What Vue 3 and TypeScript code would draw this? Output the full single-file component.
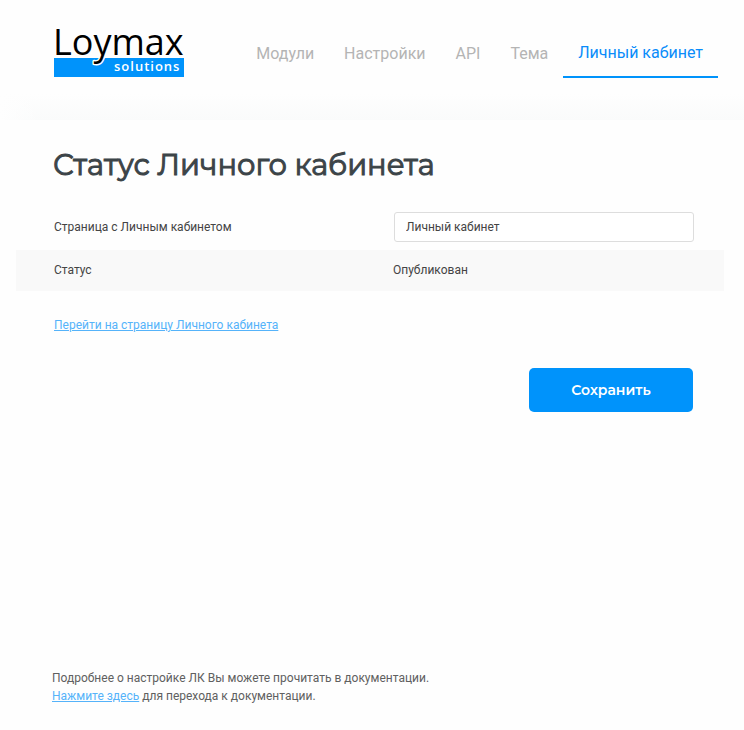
<script setup lang="ts">
import { ref } from 'vue'

const tabs = ['Модули', 'Настройки', 'API', 'Тема', 'Личный кабинет']
const active = ref('Личный кабинет')
const page = ref('Личный кабинет')
</script>

<template>
  <div class="app">
    <header class="header">
      <a class="logo" href="#" aria-label="Loymax solutions">
        <svg width="140" height="60" viewBox="-4 -4 140 60">
          <rect x="1" y="36" width="130" height="19" fill="#0093fb" />
          <text class="brand" x="0" y="33">Loymax</text>
          <text class="sub" x="61" y="49">solutions</text>
        </svg>
      </a>
      <nav class="nav">
        <a v-for="tab in tabs" :key="tab" href="#" class="tab" :class="{ active: tab === active }" @click.prevent="active = tab">{{ tab }}</a>
      </nav>
    </header>
    <main class="main">
      <h1>Статус Личного кабинета</h1>
      <form @submit.prevent>
        <div class="table">
          <div class="row field">
            <label for="page">Страница с Личным кабинетом</label>
            <select id="page" v-model="page"><option>Личный кабинет</option></select>
          </div>
          <div class="row shaded">
            <span>Статус</span>
            <span>Опубликован</span>
          </div>
        </div>
        <a class="link go" href="#">Перейти на страницу Личного кабинета</a>
        <button type="submit">Сохранить</button>
      </form>
    </main>
    <footer class="footer">
      Подробнее о настройке ЛК Вы можете прочитать в документации.<br />
      <a class="link" href="#">Нажмите здесь</a> для перехода к документации.
    </footer>
  </div>
</template>

<style>
body { margin: 0; background: #fefefe; }
</style>

<style scoped>
.app { display: flex; flex-direction: column; min-height: 100vh; box-sizing: border-box; font: 12px/18px Roboto, sans-serif; color: #444; }
.header { display: flex; align-items: flex-start; justify-content: space-between; height: 120px; box-sizing: border-box; padding: 18px 26px 0 49px; background: linear-gradient(90deg, #fefefe, transparent 40px), linear-gradient(#fefefe 78%, #fafbfb); }
.logo svg { display: block; }
.brand { font: 500 36px "Open Sans", sans-serif; fill: #000; stroke: #fff; stroke-width: 3px; stroke-linejoin: round; paint-order: stroke; }
.sub { font: 600 13px "Open Sans", sans-serif; letter-spacing: 1px; fill: #fff; }
.nav { display: flex; padding-top: 8px; }
.tab { padding: 17px 15px 12px; font-size: 16px; line-height: 22px; color: #b4b4b4; text-decoration: none; }
.tab.active { padding-top: 16px; color: #0a8cfa; border-bottom: 2px solid #0093fb; }
.main { padding: 25px 20px 0 16px; }
h1 { margin: 0 37px 19px; font: 400 29px/40px Montserrat, "Noto Sans", sans-serif; -webkit-text-stroke: 1px #3c4448; color: #3c4448; }
.row { display: grid; grid-template-columns: 339px 1fr; align-items: center; height: 41px; box-sizing: border-box; padding: 0 30px 0 38px; }
.field { height: 46px; }
.shaded { background: #f9f9f9; padding-bottom: 2px; }
select { appearance: none; height: 30px; margin: 0 0 0 1px; box-sizing: border-box; padding: 0 11px; border: 1px solid #ddd; border-radius: 3px; background: #fff; font: inherit; color: #444; }
.link { color: #55b3fa; text-decoration: underline; }
.go { display: block; width: fit-content; margin: 25px 38px 34px; }
button { display: block; margin: 0 31px 0 auto; padding: 0 0 1px; width: 164px; height: 44px; border: 0; border-radius: 5px; background: #0093fb; color: #fff; font: 600 14px Montserrat, "Noto Sans", sans-serif; }
.footer { margin-top: auto; padding: 0 52px 25px; color: #606060; }
</style>
